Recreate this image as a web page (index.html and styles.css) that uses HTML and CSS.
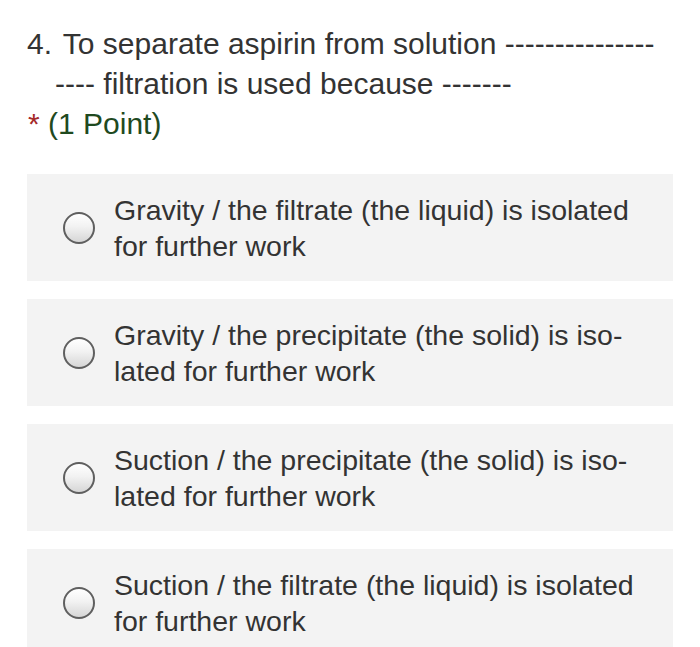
FILE: index.html
```html
<!DOCTYPE html>
<html>
<head>
<meta charset="utf-8">
<link rel="stylesheet" href="styles.css">
</head>
<body>
<div class="page">
  <div class="question">
    <div class="title"><span class="num">4.</span> To separate aspirin from solution <span class="dash">---------------</span><wbr><span class="dash">----</span> filtration is used because <span class="dash">-------</span></div>
    <div class="points"><span class="req">*</span> <span class="pts">(1 Point)</span></div>
  </div>
  <div class="options">
    <label class="option"><span class="radio"></span><span class="text">Gravity / the filtrate (the liquid) is isolated for further work</span></label>
    <label class="option"><span class="radio"></span><span class="text">Gravity / the precipitate (the solid) is iso&shy;lated for further work</span></label>
    <label class="option"><span class="radio"></span><span class="text">Suction / the precipitate (the solid) is iso&shy;lated for further work</span></label>
    <label class="option"><span class="radio"></span><span class="text">Suction / the filtrate (the liquid) is isolated for further work</span></label>
  </div>
</div>
</body>
</html>
```
FILE: styles.css
```css
html, body {
  margin: 0;
  padding: 0;
  background: #ffffff;
}
.page {
  font-family: "Liberation Sans", Arial, Helvetica, sans-serif;
  color: #333333;
  padding: 24px 27px 0 27px;
}
.question {
  font-size: 30px;
  line-height: 40px;
}
.title {
  padding-left: 28px;
  text-indent: -28px;
}
.num {
  margin-right: 3px;
}
.dash {
  white-space: nowrap;
}
.points {
  margin-left: 1px;
}
.req {
  color: #a52a2a;
}
.pts {
  color: #1f4a1f;
}
.options {
  margin-top: 30px;
  display: flex;
  flex-direction: column;
  gap: 18px;
}
.option {
  display: flex;
  align-items: center;
  gap: 19px;
  background: #f3f3f3;
  padding: 17.5px 18px 17.5px 36px;
  font-size: 28.5px;
  line-height: 36px;
}
.radio {
  flex: none;
  width: 28px;
  height: 28px;
  border: 2px solid #5f5f5f;
  border-radius: 50%;
  background: linear-gradient(to bottom, #ffffff 0%, #f2f2f2 45%, #d6d6d6 100%);
}
.text {
  flex: 1;
}
```
